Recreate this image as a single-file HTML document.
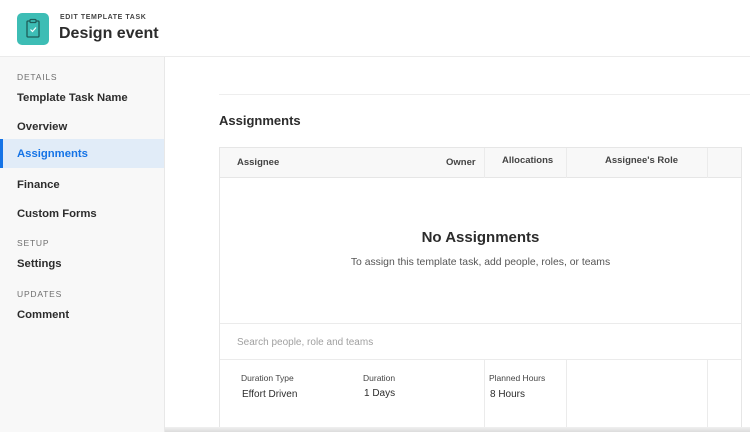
<!DOCTYPE html>
<html><head><meta charset="utf-8">
<style>
*{box-sizing:border-box;margin:0;padding:0}
html,body{width:750px;height:432px;overflow:hidden}
body{background:#fff;font-family:"Liberation Sans",sans-serif;color:#2c2c2c;position:relative}
.hdr{position:absolute;left:0;top:0;width:750px;height:57px;border-bottom:1px solid #ebebeb;background:#fff}
.icon{position:absolute;left:17px;top:13px;width:32px;height:32px;border-radius:5px;background:#3dbdb5}
.sub{position:absolute;left:60px;top:14px;font-size:7px;letter-spacing:.6px;color:#444;font-weight:bold}
.title{position:absolute;left:59px;top:25px;font-size:16px;font-weight:bold;color:#2c2c2c}
.side{position:absolute;left:0;top:57px;width:165px;height:375px;background:#f8f8f8;border-right:1px solid #e8e8e8}
.sec{position:absolute;left:17px;font-size:8.5px;letter-spacing:.8px;color:#6e6e6e}
.it{position:absolute;left:17px;font-size:11.3px;font-weight:bold;color:#2c2c2c}
.act{position:absolute;left:0;top:139px;width:164px;height:29px;background:#e1ecf8;border-left:3px solid #1473e6}
.line{position:absolute;left:219px;top:94px;width:531px;height:1px;background:#eeeeee}
h2{position:absolute;left:219px;top:113px;font-size:13px;font-weight:bold;color:#2c2c2c}
.tbl{position:absolute;left:219px;top:147px;width:523px;height:281px;border:1px solid #e6e6e6;border-bottom:none}
.th{position:absolute;left:0;top:0;width:521px;height:30px;background:#f8f8f8;border-bottom:1px solid #e6e6e6}
.vd{position:absolute;width:1px;background:#ebebeb}
.t{position:absolute;font-size:10px;color:#2c2c2c}
.hb{font-weight:bold;color:#444;font-size:9.5px}
</style></head><body>
<div class="hdr">
 <div class="icon"><svg width="32" height="32" viewBox="0 0 32 32"><rect x="10" y="8" width="12" height="16" rx="1" fill="none" stroke="#1e5c58" stroke-width="1.3"/><rect x="13" y="6.5" width="6" height="3" rx=".8" fill="#3dbdb5" stroke="#1e5c58" stroke-width="1.2"/><path d="M13.5 16.5l2 2 3.5-4" fill="none" stroke="#fff" stroke-width="1.2"/></svg></div>
 <div class="sub">EDIT TEMPLATE TASK</div>
 <div class="title">Design event</div>
</div>
<div class="side">
 <div class="sec" style="top:15px">DETAILS</div>
 <div class="it" style="top:35px">Template Task Name</div>
 <div class="it" style="top:64px">Overview</div>
 <div class="it" style="top:122px">Finance</div>
 <div class="it" style="top:151px">Custom Forms</div>
 <div class="sec" style="top:181px">SETUP</div>
 <div class="it" style="top:201px">Settings</div>
 <div class="sec" style="top:232px">UPDATES</div>
 <div class="it" style="top:252px">Comment</div>
</div>
<div class="act"><div class="it" style="left:14px;top:9px;color:#1473e6">Assignments</div></div>
<div class="line"></div>
<h2>Assignments</h2>
<div class="tbl">
 <div class="th"></div>
 <div class="vd" style="left:264px;top:0;height:30px"></div>
 <div class="vd" style="left:346px;top:0;height:30px"></div>
 <div class="vd" style="left:487px;top:0;height:30px"></div>
 <div class="t hb" style="left:17px;top:9px">Assignee</div>
 <div class="t hb" style="left:226px;top:9px">Owner</div>
 <div class="t hb" style="left:282px;top:7px">Allocations</div>
 <div class="t hb" style="left:385px;top:7px">Assignee's Role</div>
 <div class="t" style="left:0;width:521px;text-align:center;top:81px;font-size:15px;font-weight:bold">No Assignments</div>
 <div class="t" style="left:0;width:521px;text-align:center;top:109px;font-size:10.4px;color:#555">To assign this template task, add people, roles, or teams</div>
 <div style="position:absolute;left:0;top:175px;width:521px;height:1px;background:#ebebeb"></div>
 <div class="t" style="left:17px;top:189px;color:#a0a0a0">Search people, role and teams</div>
 <div style="position:absolute;left:0;top:211px;width:521px;height:1px;background:#ebebeb"></div>
 <div class="vd" style="left:264px;top:211px;height:70px"></div>
 <div class="vd" style="left:346px;top:211px;height:70px"></div>
 <div class="vd" style="left:487px;top:211px;height:70px"></div>
 <div class="t" style="left:21px;top:225px;font-size:8.5px;color:#444">Duration Type</div>
 <div class="t" style="left:143px;top:225px;font-size:8.5px;color:#444">Duration</div>
 <div class="t" style="left:269px;top:225px;font-size:8.5px;color:#444">Planned Hours</div>
 <div class="t" style="left:22px;top:241px">Effort Driven</div>
 <div class="t" style="left:144px;top:240px">1 Days</div>
 <div class="t" style="left:270px;top:241px">8 Hours</div>
</div>
<div style="position:absolute;left:165px;top:427px;width:585px;height:5px;background:linear-gradient(#f0f0f0,#dcdcdc)"></div>
</body></html>
